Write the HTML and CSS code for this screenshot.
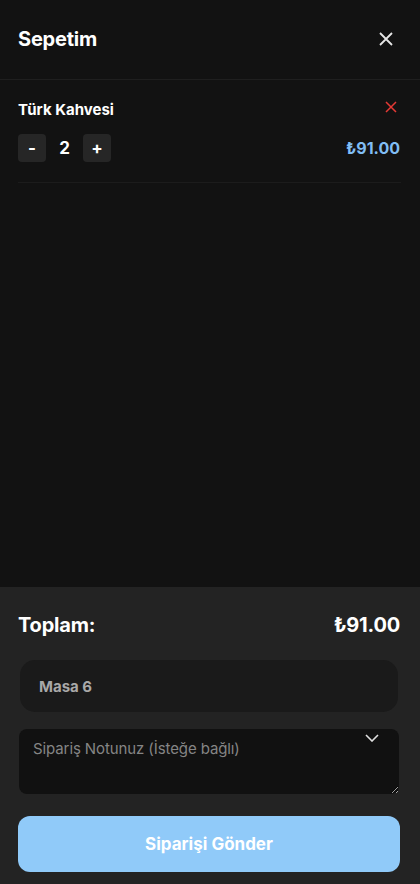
FILE: index.html
```html
<!DOCTYPE html>
<html lang="tr">
<head>
    <meta charset="UTF-8">
    <title>Sepetim</title>

    <link rel="stylesheet" href="styles.css">
</head>
<body>
    <div class="cart">
        <div class="cart-header">
            <h2 class="cart-title">Sepetim</h2>
            <button class="close-btn" type="button">
                <svg width="16" height="16" viewBox="0 0 16 16"><path d="M2 2 L14 14 M14 2 L2 14" stroke="#e6e6e6" stroke-width="1.8" fill="none"/></svg>
            </button>
        </div>

        <div class="cart-items">
            <div class="cart-item">
                <div class="item-top">
                    <span class="item-name">Türk Kahvesi</span>
                    <button class="remove-btn" type="button">
                        <svg width="12" height="12" viewBox="0 0 12 12"><path d="M1 1 L11 11 M11 1 L1 11" stroke="#e53935" stroke-width="1.5" fill="none"/></svg>
                    </button>
                </div>
                <div class="item-bottom">
                    <div class="qty">
                        <button class="qty-btn" type="button">-</button>
                        <span class="qty-num">2</span>
                        <button class="qty-btn" type="button">+</button>
                    </div>
                    <span class="item-price">₺91.00</span>
                </div>
            </div>
        </div>

        <div class="cart-footer">
            <div class="total-row">
                <span>Toplam:</span>
                <span>₺91.00</span>
            </div>
            <div class="table-box">Masa 6</div>
            <div class="note-box">
                <textarea class="note" placeholder="Sipariş Notunuz (İsteğe bağlı)"></textarea>
                <svg class="note-chevron" width="14" height="8" viewBox="0 0 14 8"><path d="M1 1 L7 7 L13 1" stroke="#e0e0e0" stroke-width="1.6" fill="none"/></svg>
            </div>
            <button class="send-btn" type="button">Siparişi Gönder</button>
        </div>
    </div>
</body>
</html>
```

FILE: styles.css
```css
* {
    margin: 0;
    padding: 0;
    box-sizing: border-box;
}

body {
    background: #121212;
    color: #fff;
    font-family: "Inter", "Noto Sans", sans-serif;
}

button {
    font-family: inherit;
    border: none;
    cursor: pointer;
}

.cart {
    width: 420px;
    height: 884px;
    display: flex;
    flex-direction: column;
}

.cart-header {
    height: 80px;
    display: flex;
    align-items: center;
    justify-content: space-between;
    padding: 0 26px 0 18px;
    border-bottom: 1px solid #1f1f1f;
}

.cart-title {
    font-size: 20px;
    font-weight: 700;
    letter-spacing: -0.2px;
    padding-bottom: 2px;
}

.close-btn {
    background: none;
    width: 16px;
    height: 16px;
    display: flex;
    margin-top: -2px;
}

.cart-items {
    flex: 1;
    padding: 0 19px 0 18px;
}

.cart-item {
    padding: 18px 0 20px;
    border-bottom: 1px solid #1c1c1c;
}

.item-top {
    display: flex;
    justify-content: space-between;
    align-items: center;
    height: 22px;
}

.item-name {
    font-size: 15px;
    font-weight: 700;
}

.remove-btn {
    background: none;
    display: flex;
    width: 12px;
    height: 12px;
    margin-right: 4px;
    margin-top: -4px;
}

.item-bottom {
    display: flex;
    justify-content: space-between;
    align-items: center;
    margin-top: 14px;
}

.qty {
    display: flex;
    align-items: center;
}

.qty-btn {
    width: 28px;
    height: 28px;
    border-radius: 4px;
    background: #262626;
    color: #fff;
    font-size: 17px;
    font-weight: 700;
    line-height: 28px;
}

.qty-num {
    width: 37px;
    text-align: center;
    font-size: 17px;
    font-weight: 700;
}

.item-price {
    color: #80bdf4;
    font-size: 16px;
    font-weight: 700;
    margin-right: 1px;
}

.cart-footer {
    background: #232323;
    padding: 24px 20px 12px 18px;
}

.total-row {
    display: flex;
    justify-content: space-between;
    font-size: 20px;
    font-weight: 700;
    letter-spacing: -0.2px;
    height: 28px;
    align-items: center;
}

.table-box {
    margin: 21px 2px 0;
    height: 52px;
    border-radius: 15px;
    background: #1a1a1a;
    color: #a8a8a8;
    font-size: 15px;
    font-weight: 700;
    padding: 0 19px;
    display: flex;
    align-items: center;
}

.note-box {
    position: relative;
    margin: 17px 1px 0;
}

.note {
    display: block;
    width: 100%;
    height: 65px;
    background: #111;
    border: none;
    border-radius: 8px;
    color: #ddd;
    font-family: inherit;
    font-size: 15px;
    letter-spacing: -0.1px;
    padding: 10px 14px;
    outline: none;
}

.note::placeholder {
    color: #858585;
}

.note-chevron {
    position: absolute;
    right: 20px;
    top: 5px;
}

.send-btn {
    margin-top: 22px;
    width: 100%;
    height: 56px;
    border-radius: 12px;
    background: #90caf9;
    color: #fff;
    font-size: 17px;
    font-weight: 700;
}
```
